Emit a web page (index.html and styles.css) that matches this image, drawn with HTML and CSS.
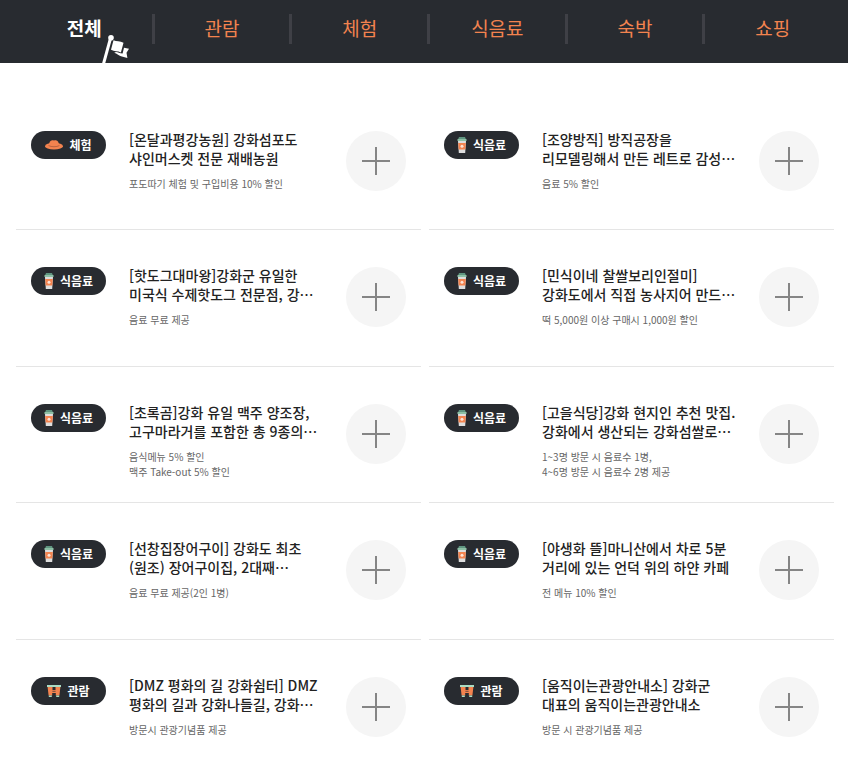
FILE: index.html
```
<!DOCTYPE html>
<html lang="ko">
<head>
    <meta charset="UTF-8">
    <meta name="viewport" content="width=device-width, initial-scale=1.0">
    <title>강화 할인 혜택</title>
    <link rel="stylesheet" href="styles.css">
</head>
<body>
<svg width="0" height="0" class="sprite" aria-hidden="true">
    <symbol id="icon-hat" viewBox="0 0 18 10">
        <ellipse cx="9" cy="6.200" rx="9" ry="3.400" fill="#f3834f"/>
        <path d="M3.800 6C4 2.500 5.200.2 7.200.2c.8 0 1.200.2 1.800.2s1-.2 1.800-.2c2 0 3.200 2.300 3.400 5.800z" fill="#f3834f"/>
        <path d="M3.600 5.600c2.800 1.500 8 1.500 10.800 0" fill="none" stroke="#a85a3c" stroke-width=".8"/>
    </symbol>
    <symbol id="icon-cup" viewBox="0 0 10 16">
        <path d="M2 0h6l.8 2H1.200z" fill="#5f9580"/>
        <path d="M.5 2h9v2h-9z" fill="#8dc0a5"/>
        <path d="M1 4h8L8.200 16H1.800z" fill="#dedede"/>
        <path d="M1.200 6h7.600l-.5 6.500H1.700z" fill="#f3834f"/>
        <circle cx="5" cy="9.300" r="1.500" fill="#fde3d6"/>
    </symbol>
    <symbol id="icon-binoculars" viewBox="0 0 14 12">
        <path d="M0 0h14v2H0z" fill="#a9dcc4"/>
        <path d="M.6 2h4.900v3h3V2h4.900L12.400 10.400H8.800V8H5.200v2.400H1.600z" fill="#f3834f"/>
        <path d="M1.800 10.400h3V12h-3zM9.200 10.400h3V12h-3z" fill="#a9dcc4"/>
        <path d="M5.400 6.300h3.200" stroke="#4d3a36" stroke-width=".8"/>
    </symbol>
    <symbol id="icon-plus" viewBox="0 0 28 28">
        <path d="M14 0v28M0 14h28" fill="none" stroke="#858585" stroke-width="2"/>
    </symbol>
</svg>

<nav class="tabs">
    <a href="#all" class="tab active">전체
        <svg class="flag" viewBox="0 0 28 28" aria-hidden="true">
            <circle cx="9" cy="2.800" r="2.800" fill="#fff"/>
            <path d="M8.600 3L1.600 28.500" stroke="#fff" stroke-width="3"/>
            <path d="M11.500 5.200c3 1.500 6.500.6 10 2.600l-2.600 9.800c-3-1.800-6.500-1-9.900-2.800z" fill="#fff"/>
            <path d="M22 12.800l5 .9-2.500 4 .9 5.300-6.400-1.700c-2.500-1.200-4-2.800-6.800-3.600l1.800-.7c2 .3 3.800 1.200 6.600 1.600z" fill="#fff"/>
        </svg>
    </a>
    <a href="#view" class="tab">관람</a>
    <a href="#experience" class="tab">체험</a>
    <a href="#food" class="tab">식음료</a>
    <a href="#stay" class="tab">숙박</a>
    <a href="#shopping" class="tab">쇼핑</a>
</nav>

<ul class="shop-list">
    <li class="shop">
        <span class="badge"><svg class="hat"><use href="#icon-hat"/></svg>체험</span>
        <div class="info">
            <h2>[온달과평강농원] 강화섬포도<br>샤인머스켓 전문 재배농원</h2>
            <p>포도따기 체험 및 구입비용 10% 할인</p>
        </div>
        <button type="button" class="more" aria-label="더보기"><svg><use href="#icon-plus"/></svg></button>
    </li>
    <li class="shop">
        <span class="badge"><svg class="cup"><use href="#icon-cup"/></svg>식음료</span>
        <div class="info">
            <h2>[조양방직] 방직공장을<br>리모델링해서 만든 레트로 감성…</h2>
            <p>음료 5% 할인</p>
        </div>
        <button type="button" class="more" aria-label="더보기"><svg><use href="#icon-plus"/></svg></button>
    </li>
    <li class="shop">
        <span class="badge"><svg class="cup"><use href="#icon-cup"/></svg>식음료</span>
        <div class="info">
            <h2>[핫도그대마왕]강화군 유일한<br>미국식 수제핫도그 전문점, 강…</h2>
            <p>음료 무료 제공</p>
        </div>
        <button type="button" class="more" aria-label="더보기"><svg><use href="#icon-plus"/></svg></button>
    </li>
    <li class="shop">
        <span class="badge"><svg class="cup"><use href="#icon-cup"/></svg>식음료</span>
        <div class="info">
            <h2>[민식이네 찰쌀보리인절미]<br>강화도에서 직접 농사지어 만드…</h2>
            <p>떡 5,000원 이상 구매시 1,000원 할인</p>
        </div>
        <button type="button" class="more" aria-label="더보기"><svg><use href="#icon-plus"/></svg></button>
    </li>
    <li class="shop">
        <span class="badge"><svg class="cup"><use href="#icon-cup"/></svg>식음료</span>
        <div class="info">
            <h2>[초록곰]강화 유일 맥주 양조장,<br>고구마라거를 포함한 총 9종의…</h2>
            <p>음식메뉴 5% 할인<br>맥주 Take-out 5% 할인</p>
        </div>
        <button type="button" class="more" aria-label="더보기"><svg><use href="#icon-plus"/></svg></button>
    </li>
    <li class="shop">
        <span class="badge"><svg class="cup"><use href="#icon-cup"/></svg>식음료</span>
        <div class="info">
            <h2>[고을식당]강화 현지인 추천 맛집.<br>강화에서 생산되는 강화섬쌀로…</h2>
            <p>1~3명 방문 시 음료수 1병,<br>4~6명 방문 시 음료수 2병 제공</p>
        </div>
        <button type="button" class="more" aria-label="더보기"><svg><use href="#icon-plus"/></svg></button>
    </li>
    <li class="shop">
        <span class="badge"><svg class="cup"><use href="#icon-cup"/></svg>식음료</span>
        <div class="info">
            <h2>[선창집장어구이] 강화도 최초<br>(원조) 장어구이집, 2대째…</h2>
            <p>음료 무료 제공(2인 1병)</p>
        </div>
        <button type="button" class="more" aria-label="더보기"><svg><use href="#icon-plus"/></svg></button>
    </li>
    <li class="shop">
        <span class="badge"><svg class="cup"><use href="#icon-cup"/></svg>식음료</span>
        <div class="info">
            <h2>[야생화 뜰]마니산에서 차로 5분<br>거리에 있는 언덕 위의 하얀 카페</h2>
            <p>전 메뉴 10% 할인</p>
        </div>
        <button type="button" class="more" aria-label="더보기"><svg><use href="#icon-plus"/></svg></button>
    </li>
    <li class="shop">
        <span class="badge"><svg class="binoculars"><use href="#icon-binoculars"/></svg>관람</span>
        <div class="info">
            <h2>[DMZ 평화의 길 강화쉼터] DMZ<br>평화의 길과 강화나들길, 강화…</h2>
            <p>방문시 관광기념품 제공</p>
        </div>
        <button type="button" class="more" aria-label="더보기"><svg><use href="#icon-plus"/></svg></button>
    </li>
    <li class="shop">
        <span class="badge"><svg class="binoculars"><use href="#icon-binoculars"/></svg>관람</span>
        <div class="info">
            <h2>[움직이는관광안내소] 강화군<br>대표의 움직이는관광안내소</h2>
            <p>방문 시 관광기념품 제공</p>
        </div>
        <button type="button" class="more" aria-label="더보기"><svg><use href="#icon-plus"/></svg></button>
    </li>
</ul>
</body>
</html>
```
FILE: styles.css
```
:root {
    --dark: #282b30;
    --orange: #f3834f;
}

* {
    box-sizing: border-box;
}

body {
    margin: 0;
    background: #fff;
    color: #222;
    font-family: "Noto Sans CJK KR", "Noto Sans", sans-serif;
}

.sprite {
    position: absolute;
}

/* category tabs */
.tabs {
    display: flex;
    padding: 14px 8px 19px 14px;
    background: var(--dark);
}

.tab {
    position: relative;
    flex: 1;
    height: 30px;
    border-left: 3px solid #3f4046;
    color: var(--orange);
    font-size: 19px;
    line-height: 28px;
    text-align: center;
    text-decoration: none;
}

.tab:first-child {
    border-color: transparent;
}

.tab.active {
    color: #fff;
    font-weight: bold;
}

.flag {
    position: absolute;
    left: calc(50% + 18px);
    top: 21px;
    width: 28px;
    height: 28px;
}

/* shop list */
.shop-list {
    display: grid;
    grid-template-columns: 1fr 1fr;
    grid-auto-rows: minmax(136px, auto) minmax(137px, auto);
    column-gap: 8px;
    margin: 0;
    padding: 31px 14px 0 16px;
    list-style: none;
}

.shop {
    display: flex;
    align-items: flex-start;
    padding: 37px 15px 20px;
    border-bottom: 1px solid #e5e5e5;
}

.shop:nth-last-child(-n+2) {
    border-bottom: 0;
}

.badge {
    display: flex;
    flex: none;
    align-items: center;
    justify-content: center;
    gap: 6px;
    width: 75px;
    height: 28px;
    margin-right: 23px;
    border-radius: 14px;
    background: var(--dark);
    color: #fff;
    font-size: 12px;
    font-weight: bold;
    line-height: 16px;
}

.hat {
    width: 18px;
    height: 10px;
}

.cup {
    width: 10px;
    height: 16px;
}

.binoculars {
    width: 14px;
    height: 12px;
}

.info {
    flex: 1;
    min-width: 0;
    margin-top: -1px;
    white-space: nowrap;
}

.info h2 {
    margin: 0;
    font-size: 14px;
    font-weight: 500;
    line-height: 19px;
}

.info p {
    margin: 8px 0 0;
    color: #666;
    font-size: 10px;
    line-height: 15px;
}

.more {
    display: flex;
    flex: none;
    align-items: center;
    justify-content: center;
    width: 60px;
    height: 60px;
    padding: 0;
    border: 0;
    border-radius: 50%;
    background: #f5f5f5;
    cursor: pointer;
}

.more svg {
    width: 28px;
    height: 28px;
}

@media (max-width: 768px) {
    .shop-list {
        grid-template-columns: 1fr;
    }
}
```
